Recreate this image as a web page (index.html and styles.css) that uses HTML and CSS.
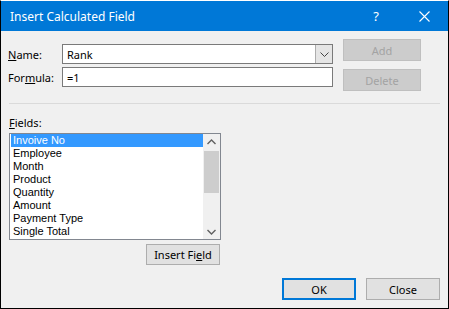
FILE: index.html
```html
<!DOCTYPE html>
<html lang="en">
<head>
  <meta charset="UTF-8" />
  <title>Insert Calculated Field</title>
  <link rel="stylesheet" href="styles.css">
</head>
<body>
  <div class="window">
    <div class="titlebar">
      <span class="title">Insert Calculated Field</span>
      <span class="help">?</span>
      <svg class="close-x" width="11" height="11" viewBox="0 0 11 11">
        <path d="M0.5 0.5 L10.5 10.5 M10.5 0.5 L0.5 10.5" stroke="#fff" stroke-width="1.1" fill="none"/>
      </svg>
    </div>
    <div class="content">
      <div class="top">
        <div class="form">
          <div class="row">
            <label class="label"><u>N</u>ame:</label>
            <div class="combo">
              <span class="combo-text">Rank</span>
              <span class="combo-btn">
                <svg width="9" height="5" viewBox="0 0 9 5"><path d="M0.5 0.5 L4.5 4.5 L8.5 0.5" stroke="#444" fill="none"/></svg>
              </span>
            </div>
          </div>
          <div class="row">
            <label class="label">For<u>m</u>ula:</label>
            <div class="input">=1</div>
          </div>
        </div>
        <div class="side">
          <button class="btn disabled">Add</button>
          <button class="btn disabled">Delete</button>
        </div>
      </div>
      <div class="sep"></div>
      <div class="fields-label"><u>F</u>ields:</div>
      <div class="listbox">
        <ul class="items">
          <li class="selected">Invoive No</li>
          <li>Employee</li>
          <li>Month</li>
          <li>Product</li>
          <li>Quantity</li>
          <li>Amount</li>
          <li>Payment Type</li>
          <li>Single Total</li>
        </ul>
        <div class="scrollbar">
          <svg class="arrow" width="9" height="6" viewBox="0 0 9 6"><path d="M0.5 5 L4.5 1 L8.5 5" stroke="#606060" stroke-width="1.4" fill="none"/></svg>
          <div class="track"><div class="thumb"></div></div>
          <svg class="arrow" width="9" height="6" viewBox="0 0 9 6"><path d="M0.5 1 L4.5 5 L8.5 1" stroke="#606060" stroke-width="1.4" fill="none"/></svg>
        </div>
      </div>
      <div class="insert-row">
        <button class="btn insert">Insert Fi<u>e</u>ld</button>
      </div>
      <div class="footer">
        <button class="btn default">OK</button>
        <button class="btn">Close</button>
      </div>
    </div>
  </div>
</body>
</html>
```

FILE: styles.css
```css
* {
  box-sizing: border-box;
}
body {
  margin: 0;
  font-family: 'Noto Sans', sans-serif;
  font-size: 11px;
  color: #000;
}
.window {
  width: 449px;
  height: 309px;
  background: #f0f0f0;
  border-top: 1px solid #fff;
  border-left: 1px solid #000;
  border-right: 1px solid #000;
  border-bottom: 1px solid #000;
  display: flex;
  flex-direction: column;
}
.titlebar {
  height: 30px;
  background: #0078d7;
  color: #fff;
  display: flex;
  align-items: center;
  padding-left: 9px;
  font-size: 12px;
}
.title {
  flex: 1;
}
.help {
  font-size: 13px;
  margin-right: 40px;
}
.close-x {
  margin-right: 18px;
}
.content {
  flex: 1;
  padding: 0 8px 0 7px;
  display: flex;
  flex-direction: column;
}
.top {
  display: flex;
  gap: 10px;
}
.form {
  margin-top: 13px;
  display: flex;
  flex-direction: column;
  gap: 3px;
}
.row {
  display: flex;
  align-items: center;
}
.label {
  width: 54px;
}
u {
  text-decoration-thickness: 1px;
  text-underline-offset: 1px;
}
.combo, .input {
  width: 271px;
  height: 20px;
  background: #fff;
  border: 1px solid #7a7a7a;
  display: flex;
  align-items: center;
}
.combo-text, .input {
  padding-left: 4px;
}
.combo-text {
  flex: 1;
}
.combo-btn {
  width: 17px;
  height: 18px;
  background: #e5e5e5;
  border-left: 1px solid #adadad;
  display: flex;
  align-items: center;
  justify-content: center;
}
.side {
  margin-top: 8px;
  display: flex;
  flex-direction: column;
  gap: 8px;
}
.btn {
  font-family: inherit;
  font-size: 11px;
  width: 74px;
  height: 22px;
  padding: 0;
  background: #e1e1e1;
  border: 1px solid #adadad;
  color: #000;
}
.side .btn {
  width: 78px;
}
.btn.disabled {
  background: #cccccc;
  border-color: #bfbfbf;
  color: #a3a3a3;
}
.sep {
  margin: 12px 0 0 1px;
  height: 1px;
  background: #dadada;
}
.fields-label {
  margin: 11px 0 0 1px;
  line-height: 16px;
}
.listbox {
  margin: 2px 0 0 1px;
  width: 212px;
  height: 107px;
  background: #fff;
  border: 1px solid #828790;
  display: flex;
}
.items {
  list-style: none;
  margin: 0;
  padding: 0;
  flex: 1;
  font-family: 'Liberation Sans', sans-serif;
  font-size: 11px;
}
.items li {
  height: 13px;
  line-height: 13px;
  padding-left: 2px;
  margin-left: 1px;
}
.items li.selected {
  background: #3399ff;
  color: #fff;
}
.scrollbar {
  width: 17px;
  background: #f0f0f0;
  display: flex;
  flex-direction: column;
  align-items: center;
  padding: 5px 0 4px;
}
.track {
  flex: 1;
  width: 100%;
  padding: 6px 1px 0;
}
.thumb {
  height: 42px;
  background: #cdcdcd;
}
.insert-row {
  width: 212px;
  margin-left: 1px;
  display: flex;
  justify-content: flex-end;
  margin-top: 4px;
}
.insert {
  height: 21px;
  margin-right: 1px;
}
.footer {
  margin-top: 13px;
  display: flex;
  justify-content: flex-end;
  gap: 10px;
}
.btn.default {
  border: 2px solid #0078d7;
}
```
